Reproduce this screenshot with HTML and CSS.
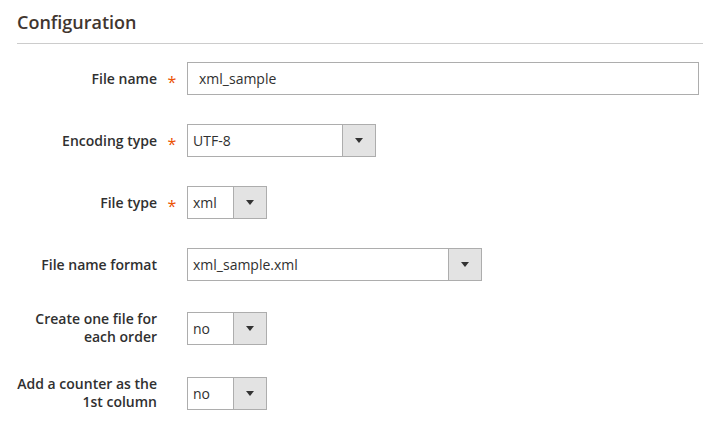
FILE: index.html
```html
<!DOCTYPE html>
<html>
<head>
<meta charset="utf-8" />
<title>Configuration</title>
<link rel="stylesheet" href="styles.css">
</head>
<body>
<div class="section">
    <div class="section-title">Configuration</div>
    <div class="form">
        <div class="field">
            <label class="label">File name</label>
            <span class="required">*</span>
            <div class="input w-full">xml_sample</div>
        </div>
        <div class="field">
            <label class="label">Encoding type</label>
            <span class="required">*</span>
            <div class="select w-mid">
                <span class="value">UTF-8</span>
                <span class="arrow"><i></i></span>
            </div>
        </div>
        <div class="field">
            <label class="label">File type</label>
            <span class="required">*</span>
            <div class="select w-small">
                <span class="value">xml</span>
                <span class="arrow"><i></i></span>
            </div>
        </div>
        <div class="field">
            <label class="label">File name format</label>
            <span></span>
            <div class="select w-wide">
                <span class="value">xml_sample.xml</span>
                <span class="arrow"><i></i></span>
            </div>
        </div>
        <div class="field">
            <label class="label">Create one file for each order</label>
            <span></span>
            <div class="select w-small">
                <span class="value">no</span>
                <span class="arrow"><i></i></span>
            </div>
        </div>
        <div class="field">
            <label class="label">Add a counter as the 1st column</label>
            <span></span>
            <div class="select w-small">
                <span class="value">no</span>
                <span class="arrow"><i></i></span>
            </div>
        </div>
    </div>
</div>
</body>
</html>
```

FILE: styles.css
```css
*{ padding:0; margin:0; box-sizing:border-box; }
body{
    background:#fff;
    font-family:"Open Sans", "Liberation Sans", sans-serif;
    color:#303030;
}
.section{
    padding-left:17px;
}
.section-title{
    font-size:18px;
    font-weight:600;
    line-height:24px;
    color:#41362f;
    padding-top:10px;
    padding-bottom:9px;
    border-bottom:1px solid #cccccc;
}
.form{
    margin-top:18px;
}
.field{
    display:grid;
    grid-template-columns:140px 30px auto;
    align-items:center;
    margin-bottom:29px;
}
.label{
    font-size:14px;
    font-weight:600;
    line-height:18px;
    text-align:right;
    color:#303030;
}
.required{
    color:#eb5202;
    font-size:16px;
    line-height:16px;
    text-align:center;
    padding-top:6px;
}
.input,
.select{
    height:33px;
    border:1px solid #adadad;
    font-size:14px;
    line-height:31px;
    background:#fff;
}
.input{
    padding-left:11px;
}
.select{
    display:flex;
}
.select .value{
    flex:1;
    padding-left:5px;
}
.select .arrow{
    width:33px;
    border-left:1px solid #adadad;
    background:#e3e3e3;
    display:flex;
    align-items:center;
    justify-content:center;
}
.select .arrow i{
    width:0;
    height:0;
    border-left:4px solid transparent;
    border-right:4px solid transparent;
    border-top:5px solid #333;
}
.w-full{ width:512px; }
.w-mid{ width:189px; }
.w-small{ width:80px; }
.w-wide{ width:295px; }
```
